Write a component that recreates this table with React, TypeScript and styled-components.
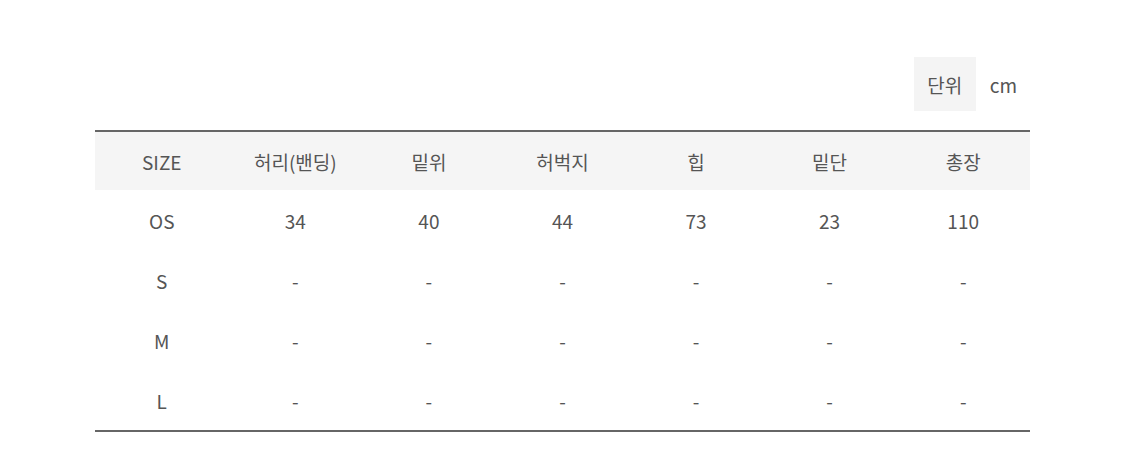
import React from "react";
import styled, { createGlobalStyle } from "styled-components";

const Global = createGlobalStyle`
  html, body { margin: 0; padding: 0; background: #fff; }
  body { font-family: "Noto Sans CJK KR", "Noto Sans", sans-serif; color: #555; }
`;

const Page = styled.div`
  width: 1125px;
  height: 452px;
  padding: 57px 95px 0 95px;
  box-sizing: border-box;
`;

const UnitBar = styled.div`
  display: flex;
  justify-content: flex-end;
  align-items: center;
  height: 54px;
  margin-bottom: 19px;
  padding-right: 13px;
`;

const UnitLabel = styled.div`
  width: 62px;
  height: 54px;
  background: #f4f4f4;
  display: flex;
  align-items: center;
  justify-content: center;
  font-size: 19px;
  color: #555;
`;

const UnitValue = styled.div`
  margin-left: 14px;
  font-size: 19px;
  color: #555;
`;

const Table = styled.table`
  width: 935px;
  border-collapse: collapse;
  table-layout: fixed;
  border-top: 2px solid #666;
  border-bottom: 2px solid #666;
`;

const HeadCell = styled.th`
  height: 58px;
  background: #f5f5f5;
  font-weight: 400;
  font-size: 19px;
  color: #555;
  text-align: center;
  padding: 0;
`;

const Cell = styled.td`
  height: 60px;
  font-size: 19px;
  color: #555;
  text-align: center;
  padding: 0;
`;

const headers = ["SIZE", "허리(밴딩)", "밑위", "허벅지", "힙", "밑단", "총장"];
const rows = [
  ["OS", "34", "40", "44", "73", "23", "110"],
  ["S", "-", "-", "-", "-", "-", "-"],
  ["M", "-", "-", "-", "-", "-", "-"],
  ["L", "-", "-", "-", "-", "-", "-"],
];

export default function App() {
  return (
    <>
      <Global />
      <Page>
        <UnitBar>
          <UnitLabel>단위</UnitLabel>
          <UnitValue>cm</UnitValue>
        </UnitBar>
        <Table>
          <thead>
            <tr>
              {headers.map((h) => (
                <HeadCell key={h}>{h}</HeadCell>
              ))}
            </tr>
          </thead>
          <tbody>
            {rows.map((r) => (
              <tr key={r[0]}>
                {r.map((c, i) => (
                  <Cell key={i}>{c}</Cell>
                ))}
              </tr>
            ))}
          </tbody>
        </Table>
      </Page>
    </>
  );
}
